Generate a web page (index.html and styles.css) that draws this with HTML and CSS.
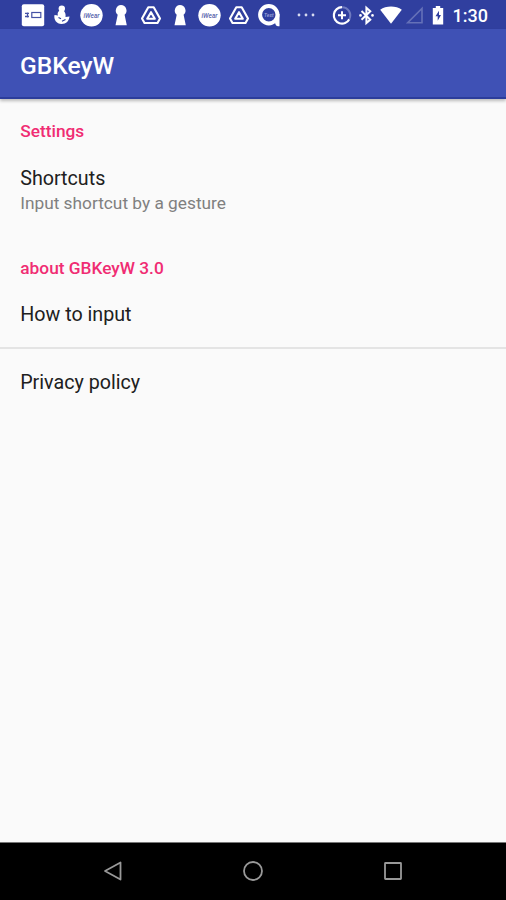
FILE: index.html
```html
<!DOCTYPE html>
<html lang="en">
<head>
<meta charset="utf-8">
<title>GBKeyW</title>
<link rel="stylesheet" href="styles.css">
</head>
<body>
<div class="screen">
  <div class="status">
    <div class="notifications">
      <svg viewBox="0 0 29.5 29"><rect x="3.8" y="4.3" width="22.4" height="22" rx="2" fill="#fff"/><rect x="13.800" y="12.5" width="9" height="5" fill="none" stroke="#4552a5" stroke-width="1.2"/><path d="M7 13.300h4M7 16.500h4M9.500 12.500v5" stroke="#4552a5" stroke-width="1.300"/></svg>
      <svg viewBox="0 0 29.5 29"><circle cx="14.800" cy="8.600" r="3.200" fill="#fff"/><path d="M12.500 10.500c-2 1.500-2.200 3.500-1.500 5l-3.500-.5c-1 4.500 2 9 7 9s7.500-3 8-7.500l-4 .5c.5-3-.5-5-2-6.500z" fill="#fff"/><path d="M11.500 17.500l2.500 1.300M15 21.300l3.500-1.800" stroke="#303f9f" stroke-width="1.200"/></svg>
      <svg viewBox="0 0 29.5 29"><circle cx="14.500" cy="15.300" r="11.200" fill="#fff"/><text class="badge" x="14.500" y="17.500">iWear</text></svg>
      <svg viewBox="0 0 29.5 29"><path d="M15 5a5.600 5.600 0 0 0-3.300 9.800l-2.200 10.400h11.300l-2.200-10.400A5.600 5.600 0 0 0 15 5z" fill="#fff"/></svg>
      <svg class="line" viewBox="0 0 29.5 29"><path d="M12.300 7.200h5.400l6.300 11.300-2.500 4.500h-13l-2.500-4.500z"/><path d="M15 12.200l3.800 6.600h-7.600z"/></svg>
      <svg viewBox="0 0 29.5 29"><path d="M15 5a5.600 5.600 0 0 0-3.300 9.800l-2.200 10.400h11.300l-2.200-10.400A5.600 5.600 0 0 0 15 5z" fill="#fff"/></svg>
      <svg viewBox="0 0 29.5 29"><circle cx="14.500" cy="15.300" r="11.200" fill="#fff"/><text class="badge" x="14.500" y="17.500">iWear</text></svg>
      <svg class="line" viewBox="0 0 29.5 29"><path d="M12.300 7.200h5.400l6.300 11.300-2.500 4.500h-13l-2.500-4.500z"/><path d="M15 12.200l3.800 6.600h-7.600z"/></svg>
      <svg viewBox="0 0 29.5 29"><circle cx="14.800" cy="14.800" r="8.700" fill="none" stroke="#fff" stroke-width="4"/><path d="M22.200 14h3.300v12.300h-1.300q-2.800 0-3.200-4z" fill="#fff"/><text class="badge badge-light" x="14.800" y="16.800">Test</text></svg>
    </div>
    <svg class="more" viewBox="0 0 18 4"><g fill="#d7daf0"><circle cx="2" cy="2" r="1.400"/><circle cx="9" cy="2" r="1.400"/><circle cx="16" cy="2" r="1.400"/></g></svg>
    <div class="system">
      <svg class="w-saver" viewBox="0 0 24 29"><path d="M12 7.200a8.200 8.200 0 1 0 7.300 12" fill="none" stroke="#fff" stroke-width="2.200"/><path d="M12 7.200a8.200 8.200 0 0 1 7.300 12" fill="none" stroke="#6f7abf" stroke-width="2"/><path d="M12 11.300v8M8 15.300h8" stroke="#fff" stroke-width="2"/></svg>
      <svg class="w-bt" viewBox="0 0 24 29"><path d="M7.500 11l8.800 8.600-3.900 3.500V7.700l3.900 3.500-8.800 8.600" fill="none" stroke="#fff" stroke-width="2"/><circle cx="6.500" cy="15.400" r="1.300" fill="#fff"/><circle cx="18.500" cy="15.400" r="1.300" fill="#fff"/></svg>
      <svg class="w-wifi" viewBox="0 0 24 29"><path d="M1.200 9.700C7 5.500 17 5.500 22.800 9.700L12 23.800z" fill="#fff"/></svg>
      <svg class="w-cell" viewBox="0 0 20 29"><path d="M17 8.500v14.200H2.700z" fill="none" stroke="#6571b8" stroke-width="1.600"/></svg>
      <svg class="w-bat" viewBox="0 0 18 29"><path d="M6.800 6h4.400v2h3v16.500H3.800V8h3z" fill="#fff"/><path d="M10 10.800l-3.500 5.400h2.200v4.600l3.300-5.900H10z" fill="#303f9f"/></svg>
      <span class="clock">1:30</span>
    </div>
  </div>
  <header class="appbar"><h1>GBKeyW</h1></header>
  <main class="list">
    <h2 class="category">Settings</h2>
    <div class="item item-two">
      <div class="label">Shortcuts</div>
      <div class="summary">Input shortcut by a gesture</div>
    </div>
    <h2 class="category">about GBKeyW 3.0</h2>
    <div class="item"><div class="label">How to input</div></div>
    <div class="item divided"><div class="label">Privacy policy</div></div>
  </main>
  <nav class="nav">
    <svg viewBox="0 0 24 24"><path d="M19.500 3.500v17L4 12z"/></svg>
    <svg viewBox="0 0 24 24"><circle cx="12" cy="12" r="9"/></svg>
    <svg viewBox="0 0 24 24"><rect x="4" y="4" width="16" height="16" rx=".5"/></svg>
  </nav>
</div>
</body>
</html>
```
FILE: styles.css
```css
* { box-sizing: border-box; }
body { margin: 0; font-family: Roboto, sans-serif; }
.screen { width: 506px; height: 900px; display: flex; flex-direction: column; background: #fafafa; overflow: hidden; }
.status { height: 29px; flex: none; background: #303f9f; display: flex; align-items: center; padding-left: 17.500px; }
.status svg { display: block; flex: none; height: 29px; }
.notifications { display: flex; }
.notifications svg { width: 29.5px; }
.line { fill: none; stroke: #fff; stroke-width: 2.100; stroke-linejoin: round; }
.badge { font: italic 500 6.5px Roboto, sans-serif; text-anchor: middle; fill: #5662ac; }
.badge-light { font-size: 5px; fill: #a0a8da; }
.status .more { width: 18px; height: 4px; margin: 1px 15px 0 14px; }
.system { display: flex; align-items: center; }
.w-saver { width: 24px; }
.w-bt { width: 24px; }
.w-wifi { width: 24px; margin-left: 1px; }
.w-cell { width: 20px; margin-left: 1.500px; }
.w-bat { width: 18px; margin-left: 4px; }
.clock { font-size: 18px; font-weight: 500; line-height: 27px; color: #fff; margin: 2px 0 0 6px; }
.appbar { height: 70px; flex: none; display: flex; align-items: center; padding: 5px 0 0 20px; background: #3f51b5; border-bottom: 2px solid #2c3d9b; box-shadow: 0 2px 3px rgba(0,0,0,.25); z-index: 1; }
h1 { margin: 0; font-size: 24.600px; line-height: 30px; font-weight: 500; color: #fff; }
.list { flex: 1; padding-top: 20px; }
.category { margin: 0; padding-left: 20.300px; font-size: 17.300px; line-height: 24px; font-weight: 500; color: #f02c73; }
.item { height: 67px; padding: 22px 20.200px 0; }
.item-two { height: 113px; padding-top: 23px; }
.label { font-size: 19.700px; line-height: 26px; color: #202020; }
.summary { font-size: 17.300px; line-height: 22px; color: #808080; }
.item.divided { border-top: 2px solid #e4e4e4; padding-top: 21px; }
.nav { height: 58px; flex: none; display: flex; justify-content: center; align-items: center; gap: 116px; padding-bottom: 2px; background: #000; border-top: 1px solid #777; }
.nav svg { width: 24px; height: 24px; fill: none; stroke: #999; stroke-width: 1.800; stroke-linejoin: round; }
```
